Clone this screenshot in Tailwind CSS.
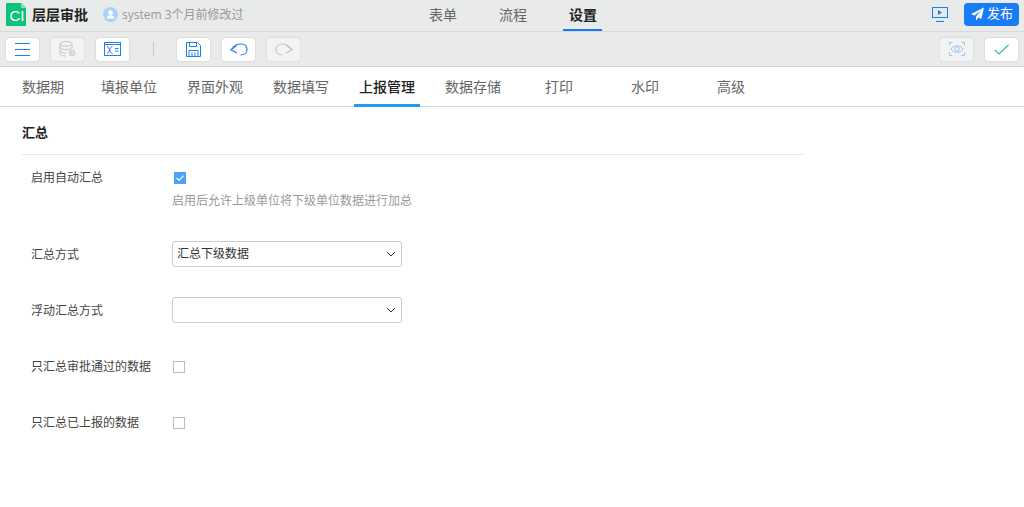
<!DOCTYPE html>
<html lang="zh-CN">
<head>
    <meta charset="UTF-8">
    <title>层层审批</title>
    <script src="https://cdn.jsdelivr.net/npm/@tailwindcss/browser@4"></script>
</head>
<body class="bg-white text-[#333] overflow-hidden font-['Open_Sans','Noto_Sans_CJK_SC',sans-serif]">
    <!-- top bar -->
    <div class="relative h-[32px] bg-[#e9eaea] border-b border-[#d9d9d9] flex items-center justify-between pl-[6px] pr-[5px]">
        <div class="flex items-center -mt-[2px]">
            <svg width="20" height="23" viewBox="0 0 20 23" class="shrink-0">
                <path d="M0 0H15L20 5V23H0Z" fill="#0fc27c"/>
                <path d="M15 0L20 5H15Z" fill="#7fe0b8"/>
                <text x="3.500" y="17.500" font-size="15" fill="#fff" font-family="Liberation Sans, sans-serif">CI</text>
            </svg>
            <span class="ml-[6px] text-[14px] font-bold text-[#222] leading-none">层层审批</span>
            <svg width="15" height="15" viewBox="0 0 15 15" class="ml-[15px]">
                <circle cx="7.5" cy="7.5" r="7.5" fill="#a9d3f8"/>
                <circle cx="7.5" cy="5.7" r="2.4" fill="#fff"/>
                <path d="M3.5 11.5c.5-2.4 2-3.3 4-3.3s3.500.9 4 3.300z" fill="#fff"/>
            </svg>
            <span class="ml-[4px] text-[12px] text-[#999] leading-none">system 3个月前修改过</span>
        </div>
        <div class="flex items-center gap-[16px]">
            <svg width="16" height="15" viewBox="0 0 16 15" fill="none" class="-mt-[2px]">
                <rect x="0.500" y="0.500" width="15" height="10" stroke="#1e7ff0"/>
                <path d="M6 3L10 5.500L6 8Z" fill="#1e7ff0"/>
                <path d="M4 14.500H12" stroke="#1e7ff0" stroke-width="1.200"/>
            </svg>
            <button class="w-[55px] h-[23px] -mt-[3px] rounded-[4px] bg-[#1a7cf5] text-white text-[13px] flex items-center justify-center gap-[2px]">
                <svg width="15" height="14" viewBox="0 0 14 14"><path d="M13.500.5L.5 7l3.500 1.600L11 3 5.500 9.500v4l2.300-3 3 1.500z" fill="#fff"/></svg>
                <span>发布</span>
            </button>
        </div>
        <div class="absolute top-0 left-[408px] flex h-[31px] text-[14px] text-[#666]">
            <div class="w-[70px] flex items-center justify-center pb-[3px]">表单</div>
            <div class="w-[70px] flex items-center justify-center pb-[3px]">流程</div>
            <div class="w-[70px] flex items-center justify-center pb-[3px] font-bold text-[#222] relative">设置<span class="absolute bottom-0 left-[15px] w-[39px] h-[2px] bg-[#1a7cf5]"></span></div>
        </div>
    </div>

    <!-- toolbar -->
    <div class="h-[35px] bg-[#e9eaea] border-b border-[#d4d4d4] flex items-center justify-between pl-[6px] pr-[6px]">
        <div class="flex items-center">
            <button class="w-[33px] h-[23px] bg-white rounded-[3px] shadow-[0_0_2px_rgba(0,0,0,0.2)] flex items-center justify-center">
                <svg width="15" height="14" viewBox="0 0 15 14" fill="none" stroke="#1e7ff0"><path d="M0 1.500H15M0 7.500H15M0 13.500H15"/></svg>
            </button>
            <button class="ml-[12px] w-[33px] h-[23px] bg-[#f2f3f3] rounded-[3px] shadow-[0_0_2px_rgba(0,0,0,0.15)] flex items-center justify-center">
                <svg width="17" height="16" viewBox="0 0 17 16" fill="none" stroke="#c4c4c4"><ellipse cx="7" cy="2.800" rx="6" ry="2.300"/><path d="M1 2.800V12.700C1 14 3.500 15 7 15M13 2.800V7M1 6.300C1 7.600 3.500 8.600 7 8.600S13 7.600 13 6.300M1 9.800C1 11 3.500 12 7 12"/><circle cx="13" cy="12" r="2.800"/><circle cx="13" cy="12" r="0.800" fill="#c4c4c4"/></svg>
            </button>
            <button class="ml-[12px] w-[33px] h-[23px] bg-white rounded-[3px] shadow-[0_0_2px_rgba(0,0,0,0.2)] flex items-center justify-center">
                <svg width="17" height="14" viewBox="0 0 17 14" fill="none" stroke="#1e7ff0"><rect x="0.500" y="0.500" width="16" height="13"/><path d="M0.500 2.500H16.500"/><path d="M3 4.500C5.500 4.500 5.500 11.500 8.500 11.500M8.500 4.500C5.500 4.500 5.500 11.500 3 11.500" stroke="#4a5be8"/><path d="M11 6.500H14.500M11 9H14.500"/></svg>
            </button>
            <span class="ml-[24px] w-[1px] h-[14px] bg-[#c9c9c9]"></span>
            <button class="ml-[23px] w-[33px] h-[23px] bg-white rounded-[3px] shadow-[0_0_2px_rgba(0,0,0,0.2)] flex items-center justify-center">
                <svg width="15" height="15" viewBox="0 0 15 15" fill="none" stroke="#1e7ff0"><path d="M.5.500H11.500L14.500 3.500V14.500H.5Z"/><path d="M3.500.5V4.500H10.500V.5M3 14.500V8.500H12V14.500M6 10.500V14.500M9 10.500V14.500"/></svg>
            </button>
            <button class="ml-[12px] w-[33px] h-[23px] bg-white rounded-[3px] shadow-[0_0_2px_rgba(0,0,0,0.2)] flex items-center justify-center">
                <svg width="18" height="13" viewBox="0 0 18 13" fill="none" stroke="#1e7ff0" stroke-width="1.200"><path d="M2 6C4 2.500 8 1 11 1C15 1 17 3.500 17 6.500C17 9.500 14.500 12 10.500 12"/><path d="M6.500 2.500L1 6.800L7 10"/></svg>
            </button>
            <button class="ml-[12px] w-[33px] h-[23px] bg-[#f2f3f3] rounded-[3px] shadow-[0_0_2px_rgba(0,0,0,0.15)] flex items-center justify-center">
                <svg width="18" height="13" viewBox="0 0 18 13" fill="none" stroke="#c4c4c4" stroke-width="1.200"><path d="M16 6C14 2.500 10 1 7 1C3 1 1 3.500 1 6.500C1 9.500 3.500 12 7.500 12"/><path d="M11.500 2.500L17 6.800L11 10"/></svg>
            </button>
        </div>
        <div class="flex items-center gap-[12px]">
            <button class="w-[33px] h-[23px] bg-[#f2f3f3] rounded-[3px] shadow-[0_0_2px_rgba(0,0,0,0.15)] flex items-center justify-center">
                <svg width="16" height="14" viewBox="0 0 16 14" fill="none" stroke="#9cc6f2"><path d="M.5 3.500V.5H3.500M12.500.5H15.500V3.500M.5 10.500V13.500H3.500M12.500 13.500H15.500V10.500"/><path d="M2 7C4 2.700 12 2.700 14 7C12 11.300 4 11.300 2 7Z"/><circle cx="8" cy="7" r="2.200"/></svg>
            </button>
            <button class="w-[33px] h-[23px] bg-white rounded-[3px] shadow-[0_0_2px_rgba(0,0,0,0.2)] flex items-center justify-center">
                <svg width="15" height="11" viewBox="0 0 15 11" fill="none" stroke="#2fb8a0" stroke-width="1.100"><path d="M.8 6L5 10L14.500 1"/></svg>
            </button>
        </div>
    </div>

    <!-- settings tabs -->
    <div class="h-[40px] border-b border-[#d4d4d4] flex text-[14px] text-[#666]">
        <div class="w-[86px] flex justify-center"><span class="px-[5px] h-[40px] leading-[40px]">数据期</span></div>
        <div class="w-[86px] flex justify-center"><span class="px-[5px] h-[40px] leading-[40px]">填报单位</span></div>
        <div class="w-[86px] flex justify-center"><span class="px-[5px] h-[40px] leading-[40px]">界面外观</span></div>
        <div class="w-[86px] flex justify-center"><span class="px-[5px] h-[40px] leading-[40px]">数据填写</span></div>
        <div class="w-[86px] flex justify-center"><span class="px-[5px] h-[40px] leading-[40px] text-[#222] font-medium border-b-[3px] border-[#1f9bf5]">上报管理</span></div>
        <div class="w-[86px] flex justify-center"><span class="px-[5px] h-[40px] leading-[40px]">数据存储</span></div>
        <div class="w-[86px] flex justify-center"><span class="px-[5px] h-[40px] leading-[40px]">打印</span></div>
        <div class="w-[86px] flex justify-center"><span class="px-[5px] h-[40px] leading-[40px]">水印</span></div>
        <div class="w-[86px] flex justify-center"><span class="px-[5px] h-[40px] leading-[40px]">高级</span></div>
    </div>

    <!-- form -->
    <div class="w-[782px] ml-[22px]">
        <div class="h-[48px] border-b border-[#e8e8e8] flex items-center text-[13px] font-bold text-[#222] pt-[5px]">汇总</div>
        <div class="pl-[9px] text-[12px] text-[#444]">
            <div class="flex mt-[15px] h-[56px]">
                <div class="w-[141px] leading-[16px]">启用自动汇总</div>
                <div>
                    <div class="w-[12px] h-[12px] mt-[2px] ml-[2px] bg-[#4ba3f7] flex items-center justify-center">
                        <svg width="8" height="6" viewBox="0 0 8 6" fill="none" stroke="#fff" stroke-width="1.200"><path d="M.5 3L3 5.300L7.500.7"/></svg>
                    </div>
                    <div class="mt-[9px] text-[#999] whitespace-nowrap leading-[16px]">启用后允许上级单位将下级单位数据进行加总</div>
                </div>
            </div>
            <div class="flex items-center mt-[15px] h-[26px]">
                <div class="w-[141px] pt-[2px]">汇总方式</div>
                <div class="w-[230px] h-[26px] border border-[#ccc] rounded-[3px] flex items-center justify-between pl-[4px] pr-[5px] text-[#333]">
                    <span>汇总下级数据</span>
                    <svg width="10" height="6" viewBox="0 0 10 6" fill="none" stroke="#333"><path d="M1 1L5 5L9 1"/></svg>
                </div>
            </div>
            <div class="flex items-center mt-[30px] h-[26px]">
                <div class="w-[141px] pt-[2px]">浮动汇总方式</div>
                <div class="w-[230px] h-[26px] border border-[#ccc] rounded-[3px] flex items-center justify-end pr-[5px]">
                    <svg width="10" height="6" viewBox="0 0 10 6" fill="none" stroke="#333"><path d="M1 1L5 5L9 1"/></svg>
                </div>
            </div>
            <div class="flex items-center mt-[31px] h-[26px]">
                <div class="w-[142px] whitespace-nowrap">只汇总审批通过的数据</div>
                <div class="w-[12px] h-[12px] border border-[#bbb]"></div>
            </div>
            <div class="flex items-center mt-[30px] h-[26px]">
                <div class="w-[142px] whitespace-nowrap">只汇总已上报的数据</div>
                <div class="w-[12px] h-[12px] border border-[#bbb]"></div>
            </div>
        </div>
    </div>
</body>
</html>
